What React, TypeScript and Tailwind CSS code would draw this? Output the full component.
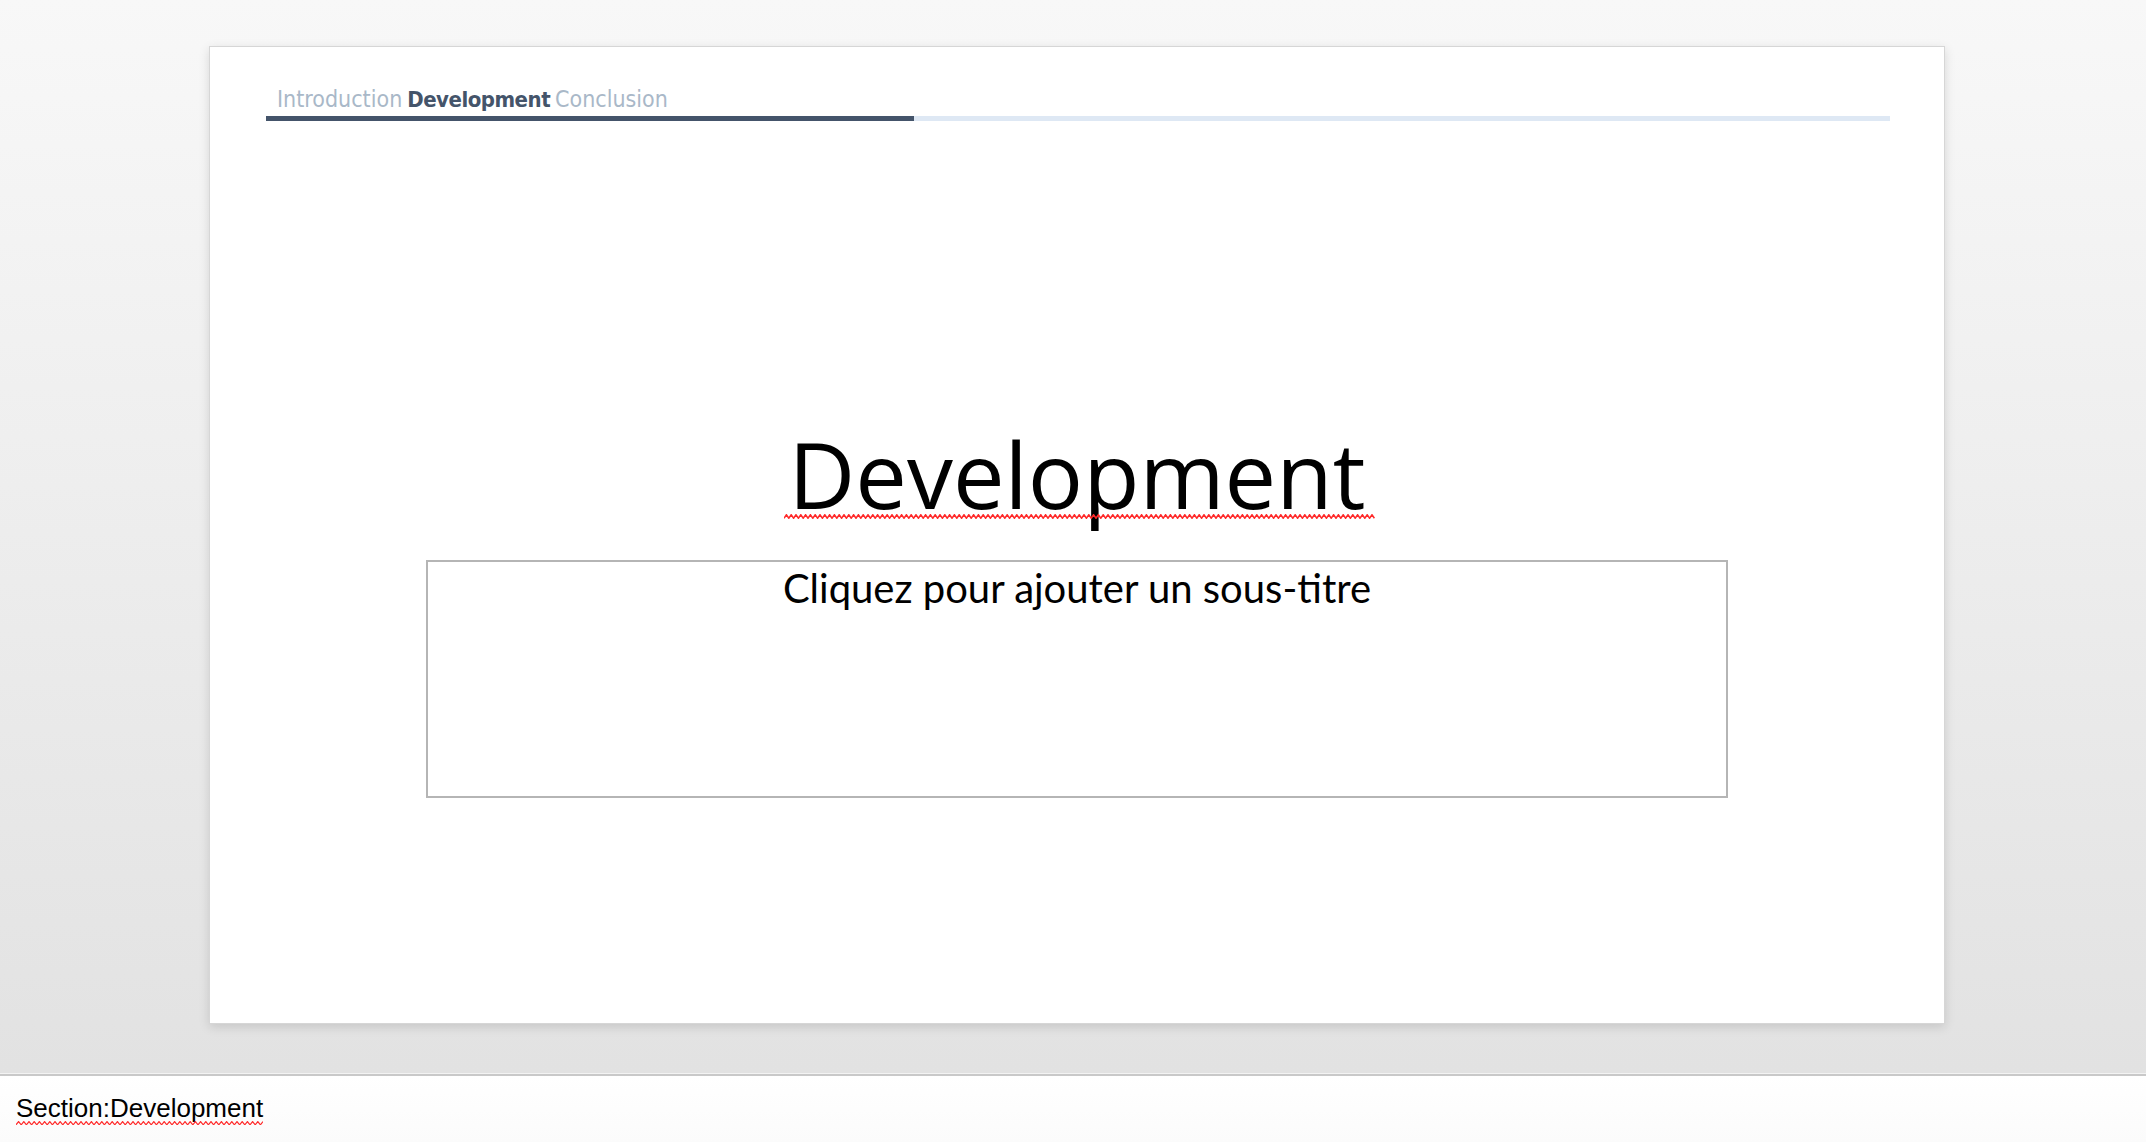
import React from "react";

function Squiggle({ width, period, amp, color, stroke }: { width: number; period: number; amp: number; color: string; stroke: number }) {
  const pts: string[] = [];
  const half = period / 2;
  let x = 0;
  let i = 0;
  while (x <= width) {
    pts.push(`${x.toFixed(2)},${i % 2 === 0 ? amp + stroke / 2 : stroke / 2}`);
    x += half;
    i++;
  }
  return (
    <svg width={width} height={amp + stroke} className="block" style={{ width, height: amp + stroke }}>
      <polyline points={pts.join(" ")} fill="none" stroke={color} strokeWidth={stroke} />
    </svg>
  );
}

export default function App() {
  return (
    <div className="w-[2146px] h-[1142px] overflow-hidden flex flex-col bg-white">
      {/* Editor area */}
      <div className="h-[1073px] bg-gradient-to-b from-[#f8f8f8] to-[#e2e2e2] pt-[46px] pl-[8px] flex justify-center">
        <div className="w-[1736px] h-[978px] bg-white border border-[#d6d6d6] shadow-[0_3px_10px_rgba(0,0,0,0.13)] flex flex-col">
          {/* Header nav */}
          <div className="pt-[41px] pl-[56px] pr-[54px] flex flex-col">
            <div
              className="pl-[11px] h-[22px] leading-[22px] text-[22px] whitespace-nowrap flex items-baseline gap-[5px] font-stretch-condensed"
              style={{ fontFamily: '"DejaVu Sans Condensed", "DejaVu Sans", sans-serif' }}
            >
              <span className="text-[#a9b8c8] font-light text-[23px]">Introduction</span>
              <span className="text-[#44546a] font-bold tracking-[-0.5px]">Development</span>
              <span className="text-[#a9b8c8] font-light text-[23px]">Conclusion</span>
            </div>
            <div className="mt-[6px] h-[5px] flex">
              <div className="w-[648px] bg-[#44546a]" />
              <div className="flex-1 bg-[#dee8f4]" />
            </div>
          </div>

          {/* Title */}
          <div className="mt-[307px] flex flex-col items-center">
            <div
              className="h-[92px] leading-[92px] text-[92px] text-black whitespace-nowrap"
              style={{ fontFamily: '"Open Sans", sans-serif' }}
            >
              Development
            </div>
            <div className="-mt-[6px] h-[5px] ml-[4px]">
              <Squiggle width={591} period={4.8} amp={3.5} color="#ff2a2a" stroke={1.5} />
            </div>
          </div>

          {/* Subtitle box */}
          <div className="mt-[41px] mx-auto w-[1302px] h-[238px] border-2 border-[#b5b5b5] pt-[6px]">
            <div
              className="h-[40px] leading-[40px] text-[40px] text-black text-center whitespace-nowrap"
              style={{ fontFamily: 'Lato, "Open Sans", sans-serif' }}
            >
              Cliquez pour ajouter un sous-titre
            </div>
          </div>
        </div>
      </div>

      {/* Separator */}
      <div className="h-[1px] bg-[#f3f3f3]" />
      <div className="h-[2px] bg-[#c9c9c9]" />

      {/* Notes panel */}
      <div className="flex-1 bg-gradient-to-b from-[#ffffff] to-[#fbfbfb] pt-[19px] pl-[16px] flex flex-col items-start">
        <div
          className="text-[26px] leading-[26px] h-[26px] text-black whitespace-nowrap"
          style={{ fontFamily: '"Liberation Sans", Arial, sans-serif' }}
        >
          Section:Development
        </div>
        <div className="mt-[0px]">
          <Squiggle width={247} period={5.2} amp={3.2} color="#ff2a2a" stroke={1.2} />
        </div>
      </div>
    </div>
  );
}
